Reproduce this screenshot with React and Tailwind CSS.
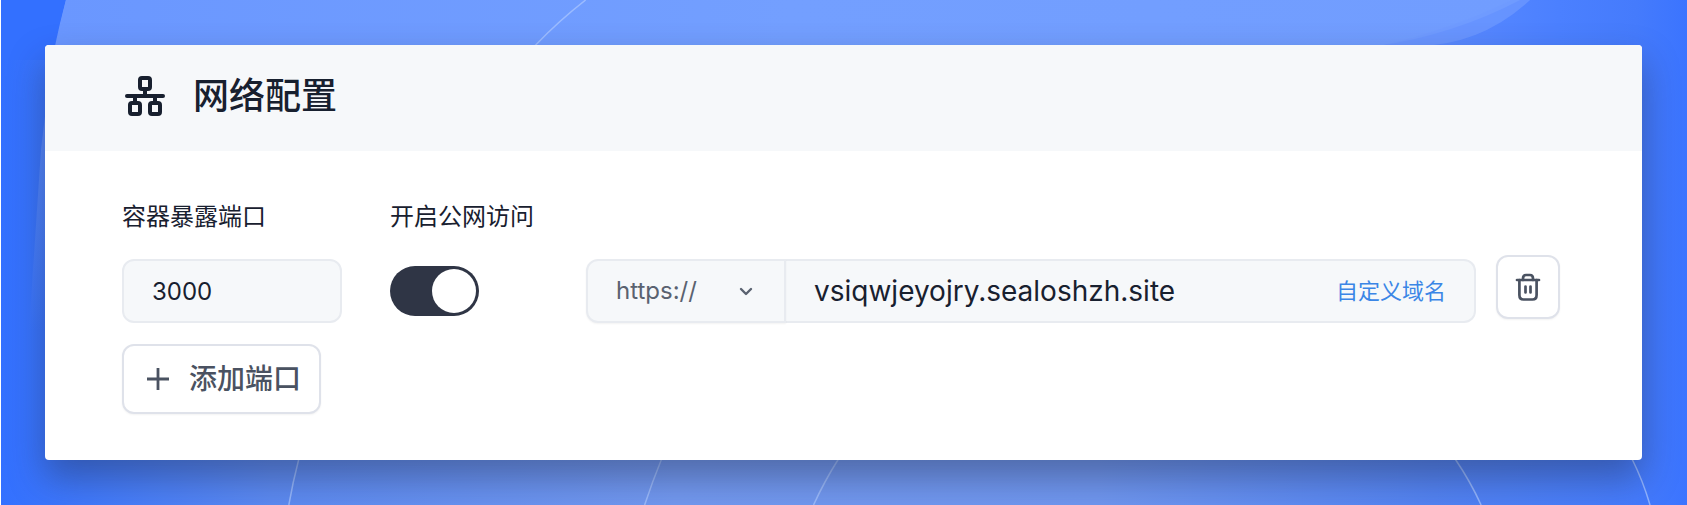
import { useState } from "react";

function Backdrop() {
  return (
    <svg
      className="absolute inset-0 h-full w-full"
      viewBox="0 0 1687 505"
      preserveAspectRatio="none"
      aria-hidden="true"
    >
      <defs>
        <linearGradient id="base" x1="0" x2="1" y1="0" y2="0">
          <stop offset="0" stopColor="#3370ff" />
          <stop offset="0.026" stopColor="#3a75fd" />
          <stop offset="0.16" stopColor="#5c8af2" />
          <stop offset="0.4" stopColor="#7399f0" />
          <stop offset="0.65" stopColor="#7097f0" />
          <stop offset="0.85" stopColor="#5383f3" />
          <stop offset="0.97" stopColor="#457bfc" />
          <stop offset="1" stopColor="#3b74ff" />
        </linearGradient>
        <linearGradient id="sweep" x1="0" x2="1" y1="0" y2="0">
          <stop offset="0" stopColor="#6a97ff" />
          <stop offset="0.5" stopColor="#739fff" />
          <stop offset="1" stopColor="#719dff" />
        </linearGradient>
        <linearGradient id="corner" x1="0" x2="1" y1="0" y2="0">
          <stop offset="0" stopColor="#628fff" />
          <stop offset="0.7" stopColor="#4b80ff" />
          <stop offset="1" stopColor="#457bfc" />
        </linearGradient>
        <linearGradient id="side" x1="0" x2="0" y1="0" y2="1">
          <stop offset="0" stopColor="#6a97ff" />
          <stop offset="1" stopColor="#6a97ff" stopOpacity="0" />
        </linearGradient>
      </defs>
      <rect width="1687" height="505" fill="url(#base)" />
      <path d="M0 0 H65 L52 60 H0Z" fill="#3370ff" />
      <rect x="1380" width="256" height="100" fill="url(#corner)" />
      <path d="M65 0 Q50 60 40 150 L28 330 H120 V0Z" fill="url(#side)" />
      <path d="M65 0 Q59 22 54 46 H1378 Q1455 34 1520 0Z" fill="url(#sweep)" />
      <path d="M1380 46 Q1450 30 1512 0 H1530 Q1480 46 1415 46Z" fill="#6f9aff" opacity="0.7" />
      <g fill="none" stroke="#a9c6ff" strokeWidth="1.5" opacity="0.75">
        <path d="M585 0 Q558 21 534 46" />
        <path d="M298 459 Q292 482 288 505" />
        <path d="M661 459 Q652 481 644 505" />
        <path d="M838 459 Q824 481 813 505" />
        <path d="M1455 459 Q1470 481 1481 505" />
        <path d="M1632 459 Q1643 481 1650 505" />
      </g>
    </svg>
  );
}

function NetworkIcon() {
  return (
    <svg className="size-10" viewBox="0 0 40 40" fill="none" stroke="currentColor" strokeWidth="4" aria-hidden="true">
      <rect x="15" y="2" width="10" height="11" rx="2" />
      <rect x="5" y="27" width="10" height="11" rx="2" />
      <rect x="25" y="27" width="10" height="11" rx="2" />
      <path d="M2 20 H38" strokeLinecap="round" />
      <path d="M20 12 V20 M10 20 V28 M30 20 V28" />
    </svg>
  );
}

function TrashIcon() {
  return (
    <svg
      className="size-7"
      viewBox="0 0 28 28"
      fill="none"
      stroke="currentColor"
      strokeWidth="2.7"
      strokeLinecap="round"
      strokeLinejoin="round"
      aria-hidden="true"
    >
      <path d="M3 7 H25" />
      <path d="M9 7 V5.500 Q9 2 12 2 H16 Q19 2 19 5.500 V7" />
      <path d="M5.400 7 V22 Q5.400 26.500 9.500 26.500 H18.500 Q22.600 26.500 22.600 22 V7" />
      <path d="M11.500 13.500 V19.500 M16.500 13.500 V19.500" />
    </svg>
  );
}

export default function App() {
  const [port, setPort] = useState("3000");
  const [open, setOpen] = useState(true);
  const [protocol, setProtocol] = useState("https://");

  return (
    <div className="relative min-h-screen overflow-hidden border-l border-white p-11 pt-[45px] pr-[45px] font-['Inter','Noto_Sans_CJK_SC',sans-serif] text-[#18202f]">
      <Backdrop />
      <main className="relative overflow-hidden rounded-[4px] bg-white shadow-[0_18px_36px_rgba(30,40,70,0.42)]">
        <header className="flex h-[106px] items-center gap-7 bg-[#f6f8fa] px-20 pb-1">
          <NetworkIcon />
          <h1 className="text-[36px] leading-[48px] font-medium">网络配置</h1>
        </header>

        <section className="pt-12 pr-[82px] pb-[46px] pl-[77px]">
          <div className="flex items-end">
            <div className="flex flex-col gap-6">
              <label htmlFor="port" className="text-2xl leading-9">
                容器暴露端口
              </label>
              <input
                id="port"
                value={port}
                onChange={(e) => setPort(e.target.value)}
                className="h-16 w-[220px] rounded-xl border-2 border-[#e8ebf0] bg-[#f6f8fa] px-7 text-2xl outline-none"
              />
            </div>

            <div className="ml-12 flex flex-col gap-6">
              <label htmlFor="public" className="text-2xl leading-9">
                开启公网访问
              </label>
              <div className="flex h-16 items-center">
                <input
                  id="public"
                  type="checkbox"
                  role="switch"
                  checked={open}
                  onChange={(e) => setOpen(e.target.checked)}
                  className="flex h-[50px] w-[89px] appearance-none items-center rounded-full bg-[#cbd2dc] p-[3px] before:size-11 before:rounded-full before:bg-white checked:justify-end checked:bg-[#2f3545]"
                />
              </div>
            </div>

            <div className="ml-[52px] flex h-16 min-w-0 flex-1">
              <div className="relative w-[200px] shrink-0">
                <select
                  aria-label="协议"
                  value={protocol}
                  onChange={(e) => setProtocol(e.target.value)}
                  className="h-full w-full appearance-none rounded-l-xl border-2 border-[#e8ebf0] bg-[#f6f8fa] px-7 text-2xl text-[#5a6270] shadow-xs outline-none"
                >
                  <option>https://</option>
                  <option>grpcs://</option>
                  <option>wss://</option>
                </select>
                <svg
                  className="pointer-events-none absolute top-6 right-8 size-4 text-[#5a6270]"
                  viewBox="0 0 16 16"
                  fill="none"
                  stroke="currentColor"
                  strokeWidth="2.4"
                  strokeLinecap="round"
                  strokeLinejoin="round"
                  aria-hidden="true"
                >
                  <path d="M3 6 L8 11 L13 6" />
                </svg>
              </div>
              <div className="flex min-w-0 flex-1 items-center justify-between rounded-r-xl border-2 border-l-0 border-[#e8ebf0] bg-[#f6f8fa] px-7">
                <span className="text-[28px] leading-9">vsiqwjeyojry.sealoshzh.site</span>
                <a href="#domain" className="text-[22px] leading-9 text-[#3b86e6]">
                  自定义域名
                </a>
              </div>
            </div>

            <button
              type="button"
              aria-label="删除端口"
              className="mb-1 ml-5 flex size-16 items-center justify-center rounded-xl border-2 border-[#dfe2ea] bg-white text-[#4a5261] shadow-xs"
            >
              <TrashIcon />
            </button>
          </div>

          <button
            type="button"
            className="mt-[21px] flex h-[70px] items-center gap-5 rounded-xl border-2 border-[#dfe2ea] bg-white pr-[18px] pl-[23px] text-[28px] leading-9 font-medium text-[#4a5261] shadow-xs"
          >
            <svg className="size-[22px]" viewBox="0 0 22 22" stroke="currentColor" strokeWidth="2.8" aria-hidden="true">
              <path d="M0 11 H22 M11 0 V22" />
            </svg>
            添加端口
          </button>
        </section>
      </main>
    </div>
  );
}
